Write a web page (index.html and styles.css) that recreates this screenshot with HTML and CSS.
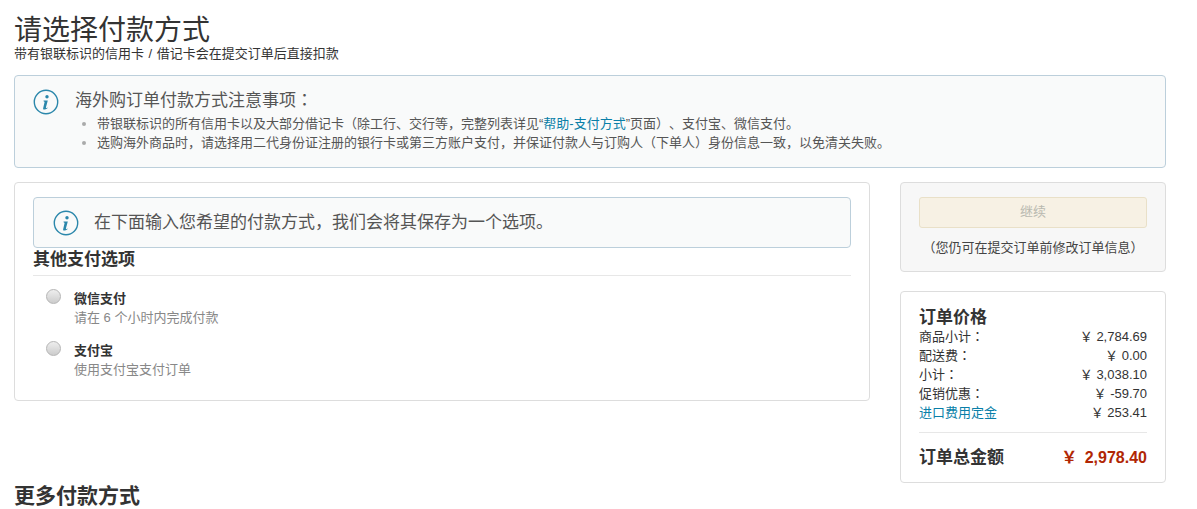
FILE: index.html
```html
<!DOCTYPE html>
<html lang="zh-CN">
  <head>
    <meta charset="UTF-8" />
    <title>请选择付款方式</title>
    <link rel="stylesheet" href="styles.css">
  </head>
  <body>
    <h1>请选择付款方式</h1>
    <p class="subtitle">带有银联标识的信用卡 / 借记卡会在提交订单后直接扣款</p>

    <div class="alert notice">
      <svg class="info-icon" width="26" height="26" viewBox="0 0 26 26">
        <circle cx="13" cy="13" r="11.7" fill="none" stroke="#2b87ab" stroke-width="1.4" />
        <circle cx="14" cy="7.8" r="1.7" fill="#2b87ab" />
        <path d="M10.6 11.4h4.2l-1.9 7.2c-.1.5.3.6 1.6-.2l.2.5c-1.500 1.300-2.500 1.700-3.500 1.700-1 0-1.300-.7-1-1.700l1.400-5.800c-.3-.6-.7-.8-1.100-.8z" fill="#2b87ab" />
      </svg>
      <div>
        <div class="notice-title">海外购订单付款方式注意事项<span class="colon" lang="zh-TW">：</span></div>
        <ul>
          <li>带银联标识的所有信用卡以及大部分借记卡（除工行、交行等，完整列表详见“<a href="#">帮助-支付方式</a>”页面）、支付宝、微信支付。</li>
          <li>选购海外商品时，请选择用二代身份证注册的银行卡或第三方账户支付，并保证付款人与订购人（下单人）身份信息一致，以免清关失败。</li>
        </ul>
      </div>
    </div>

    <div class="columns">
      <div class="box main-box">
        <div class="alert hint">
          <svg class="info-icon" width="26" height="26" viewBox="0 0 26 26">
            <circle cx="13" cy="13" r="11.7" fill="none" stroke="#2b87ab" stroke-width="1.4" />
            <circle cx="14" cy="7.8" r="1.7" fill="#2b87ab" />
            <path d="M10.6 11.4h4.2l-1.9 7.2c-.1.5.3.6 1.6-.2l.2.5c-1.500 1.300-2.500 1.700-3.500 1.700-1 0-1.300-.7-1-1.700l1.400-5.800c-.3-.6-.7-.8-1.100-.8z" fill="#2b87ab" />
          </svg>
          <span>在下面输入您希望的付款方式，我们会将其保存为一个选项。</span>
        </div>
        <h3>其他支付选项</h3>
        <div class="pay-option">
          <span class="radio"></span>
          <div>
            <div class="pay-name">微信支付</div>
            <div class="pay-desc">请在 6 个小时内完成付款</div>
          </div>
        </div>
        <div class="pay-option">
          <span class="radio"></span>
          <div>
            <div class="pay-name">支付宝</div>
            <div class="pay-desc">使用支付宝支付订单</div>
          </div>
        </div>
      </div>

      <div class="side">
        <div class="box continue-box">
          <button type="button" class="continue-btn" disabled>继续</button>
          <p>（您仍可在提交订单前修改订单信息）</p>
        </div>
        <div class="box price-box">
          <h4>订单价格</h4>
          <div class="price-row"><span>商品小计<span class="colon" lang="zh-TW">：</span></span><span>￥ 2,784.69</span></div>
          <div class="price-row"><span>配送费<span class="colon" lang="zh-TW">：</span></span><span>￥ 0.00</span></div>
          <div class="price-row"><span>小计<span class="colon" lang="zh-TW">：</span></span><span>￥ 3,038.10</span></div>
          <div class="price-row"><span>促销优惠<span class="colon" lang="zh-TW">：</span></span><span>￥ -59.70</span></div>
          <div class="price-row"><a href="#">进口费用定金</a><span>￥ 253.41</span></div>
          <div class="price-total"><span>订单总金额</span><span class="total-num">￥ 2,978.40</span></div>
        </div>
      </div>
    </div>

    <h2>更多付款方式</h2>
  </body>
</html>
```

FILE: styles.css
```css
body {
  margin: 0;
  padding: 0 31px 0 14px;
  overflow: hidden;
  font-family: Arial, "Liberation Sans", "Noto Sans CJK SC", sans-serif;
  font-size: 13px;
  line-height: 19px;
  color: #333;
  background: #fff;
  text-spacing-trim: space-all;
}
h1 {
  margin: 0;
  padding-top: 13px;
  font-size: 28px;
  font-weight: normal;
  line-height: 35px;
}
.subtitle {
  margin: -1px 0 0;
  height: 14px;
  line-height: 14px;
  word-spacing: 1px;
  color: #333;
}
a {
  color: #0a7fa8;
  text-decoration: none;
}
/* centered colon, the SC one sits in the lower left */
.colon {
  font-family: "Noto Sans CJK TC", sans-serif;
  line-height: 1;
}
.alert {
  display: flex;
  background: #f9fafa;
  border: 1px solid #bccfdb;
  border-radius: 4px;
}
.notice {
  margin-top: 14px;
  height: 93px;
  box-sizing: border-box;
  padding: 13px 18px;
  gap: 16px;
}
.notice-title {
  font-size: 17px;
  line-height: 24px;
  color: #555;
}
ul {
  margin: 1px 0 0;
  padding-left: 22px;
  color: #555;
}
li {
  line-height: 19px;
}
li::marker {
  color: #aaa;
}
.columns {
  display: flex;
  justify-content: space-between;
  margin-top: 14px;
}
.box {
  box-sizing: border-box;
  border: 1px solid #ddd;
  border-radius: 4px;
}
.main-box {
  width: 856px;
  height: 219px;
  padding: 14px 18px;
}
.hint {
  align-items: center;
  height: 51px;
  box-sizing: border-box;
  padding: 0 19px;
  gap: 15px;
  font-size: 17px;
  color: #555;
}
h3 {
  margin: 0;
  padding: 1px 0 4px;
  border-bottom: 1px solid #e7e7e7;
  font-size: 17px;
  line-height: 22px;
  color: #333;
}
.pay-option {
  display: flex;
  gap: 13px;
  margin: 13px 0 -1px 13px;
  height: 40px;
}
.radio {
  width: 13px;
  height: 13px;
  margin-top: 0;
  border: 1px solid #b5b5b5;
  border-radius: 50%;
  background: linear-gradient(#eee, #ccc);
}
.pay-name {
  font-weight: bold;
  color: #333;
}
.pay-desc {
  color: #888;
}
.side {
  width: 266px;
}
.continue-box {
  height: 90px;
  padding: 14px 18px;
  background: #f7f7f7;
  text-align: center;
}
.continue-btn {
  display: block;
  width: 100%;
  height: 31px;
  padding: 0 0 2px;
  border: 1px solid #e9e0c8;
  border-radius: 3px;
  background: #f7f1e4;
  color: #b9b9b0;
  font: inherit;
}
.continue-box p {
  margin: 10px 0 0;
  color: #444;
}
.price-box {
  margin-top: 19px;
  height: 192px;
  padding: 14px 18px;
}
h4 {
  margin: 0 0 -1px;
  padding-top: 1px;
  font-size: 17px;
  line-height: 21px;
}
.price-row {
  display: flex;
  justify-content: space-between;
}
.price-total {
  display: flex;
  justify-content: space-between;
  align-items: center;
  margin-top: 10px;
  padding-top: 14px;
  border-top: 1px solid #e7e7e7;
  font-size: 17px;
  font-weight: bold;
  line-height: 22px;
}
.total-num {
  font-size: 16px;
  word-spacing: 3px;
  color: #b12704;
}
h2 {
  margin: 0;
  padding-top: 1px;
  font-size: 21px;
  line-height: 24px;
  color: #333;
}
```
